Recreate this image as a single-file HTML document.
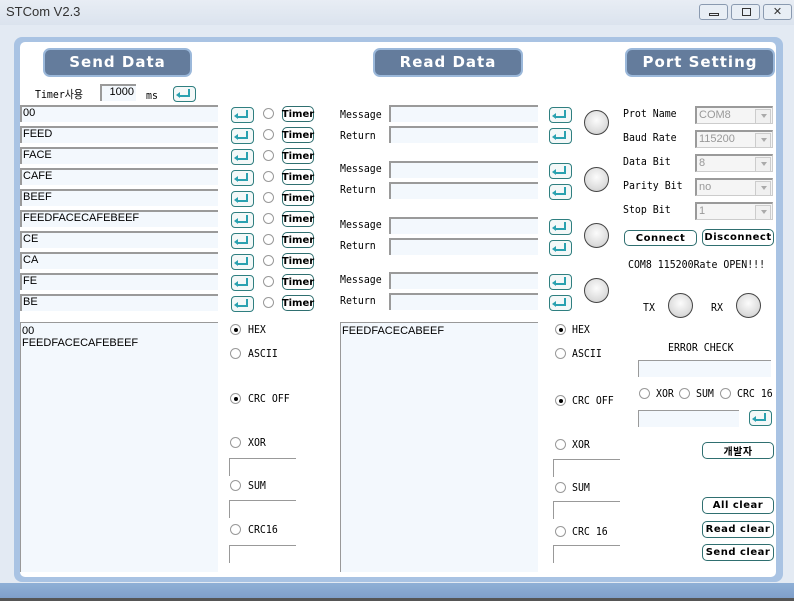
<!DOCTYPE html>
<html><head><meta charset="utf-8"><style>
*{box-sizing:border-box;margin:0;padding:0}
body{width:794px;height:601px;overflow:hidden;background:#e3eaf3;font-family:"Liberation Sans","Noto Sans CJK KR","NanumGothic",sans-serif;font-size:12px;color:#000;position:relative}
.a{position:absolute}
#title{left:0;top:0;width:794px;height:25px;background:linear-gradient(#e8edf4,#dbe3ee);font-size:13px;color:#333}
#frame{left:14px;top:37px;width:769px;height:545px;background:#a9c3e3;border-radius:8px}
#panel{left:20px;top:42px;width:756px;height:535px;background:#fff;border-radius:5px}
#bottom{left:0;top:583px;width:794px;height:15px;background:linear-gradient(#8fb0d6,#7f9fca)}
#bline{left:0;top:598px;width:794px;height:3px;background:#555}
.hdr{background:#647c9c;border:2px solid #9bb8da;border-radius:7px;color:#fff;font-weight:bold;font-size:15px;text-align:center;line-height:25px;letter-spacing:1px;font-family:"DejaVu Sans",sans-serif}
.in{background:#f3f8fd;border-top:2px solid #9a9a9a;border-left:2px solid #9a9a9a;font-size:11px;padding-left:1px;line-height:12px}
.ent{width:23px;height:16px;border:1.5px solid #2f7f80;border-radius:4px;background:#f4f8f8}
.ent:after{content:"";position:absolute;left:6px;top:2px;width:8px;height:6px;border-right:2.5px solid #2aa1b0;border-bottom:2.5px solid #2aa1b0}
.ent:before{content:"";position:absolute;left:2px;top:5px;border:3.5px solid transparent;border-right:4px solid #2aa1b0;border-left:0}
.rad{width:11px;height:11px;border-radius:50%;border:1px solid #999;background:#fff}
.rad.on:after{content:"";position:absolute;left:2.5px;top:2.5px;width:4px;height:4px;border-radius:50%;background:#000}
.tb,.btn{display:flex;align-items:center;justify-content:center;border:1.5px solid #2f6f70;border-radius:5px;background:#fff;font-weight:bold;font-size:10px;font-family:"DejaVu Sans",sans-serif}
.tb{width:32px;height:16px;letter-spacing:0}
.btn{letter-spacing:.5px}
.led{width:25px;height:25px;border-radius:50%;border:1.5px solid #444;background:radial-gradient(circle at 50% 40%,#fcfcfc,#dcdcdc 65%,#bdbdbd)}
.lb{font-size:11px;font-family:"DejaVu Sans Mono","Liberation Mono",monospace;transform:scaleX(.9);transform-origin:left}
.cb{width:78px;height:18px;border:2px solid #9a9a9a;border-right:1px solid #ccc;border-bottom:1px solid #ccc;background:#f5f5f5;color:#999;font-size:11px;padding-left:2px;line-height:14px}
.cb:after{content:"";position:absolute;right:1px;top:1px;width:14px;height:13px;background:#f0f0f0;border:1px solid #ccc}
.cb:before{content:"";position:absolute;right:5px;top:6px;border:3px solid transparent;border-top:4px solid #aaa;z-index:2}
.ln{border-top:1px solid #999;border-left:1px solid #999;height:18px}
</style></head><body>
<div id="title" class="a"><span class="a" style="left:6px;top:4px">STCom V2.3</span>
<div class="a" style="left:699px;top:4px;width:29px;height:16px;border:1px solid #8a9ab0;border-radius:3px;background:#e8eef5"><div class="a" style="left:9px;top:8px;width:10px;height:3px;border:1px solid #333"></div></div>
<div class="a" style="left:731px;top:4px;width:29px;height:16px;border:1px solid #8a9ab0;border-radius:3px;background:#e8eef5"><div class="a" style="left:10px;top:3px;width:9px;height:8px;border:1px solid #333"></div></div>
<div class="a" style="left:763px;top:4px;width:29px;height:16px;border:1px solid #8a9ab0;border-radius:3px;background:#e8eef5;text-align:center;font-size:11px;line-height:14px">✕</div>
</div>
<div id="frame" class="a"></div>
<div id="panel" class="a"></div>
<div id="bottom" class="a"></div>
<div id="bline" class="a"></div>

<div class="a hdr" style="left:43px;top:48px;width:149px;height:29px">Send Data</div>
<div class="a hdr" style="left:373px;top:48px;width:150px;height:29px">Read Data</div>
<div class="a hdr" style="left:625px;top:48px;width:150px;height:29px">Port Setting</div>

<div class="a lb" style="left:35px;top:86px">Timer사용</div>
<div class="a in" style="left:100px;top:84px;width:36px;height:17px;text-align:right;padding-right:2px">1000</div>
<div class="a lb" style="left:146px;top:89px">ms</div>
<div class="a ent" style="left:173px;top:86px"></div>

<div class="a in" style="left:20px;top:105px;width:198px;height:17px">00</div>
<div class="a in" style="left:20px;top:126px;width:198px;height:17px">FEED</div>
<div class="a in" style="left:20px;top:147px;width:198px;height:17px">FACE</div>
<div class="a in" style="left:20px;top:168px;width:198px;height:17px">CAFE</div>
<div class="a in" style="left:20px;top:189px;width:198px;height:17px">BEEF</div>
<div class="a in" style="left:20px;top:210px;width:198px;height:17px">FEEDFACECAFEBEEF</div>
<div class="a in" style="left:20px;top:231px;width:198px;height:17px">CE</div>
<div class="a in" style="left:20px;top:252px;width:198px;height:17px">CA</div>
<div class="a in" style="left:20px;top:273px;width:198px;height:17px">FE</div>
<div class="a in" style="left:20px;top:294px;width:198px;height:17px">BE</div>

<div class="a ent" style="left:231px;top:107px"></div><div class="a rad" style="left:263px;top:108px"></div><div class="a tb" style="left:282px;top:106px">Timer</div>
<div class="a ent" style="left:231px;top:128px"></div><div class="a rad" style="left:263px;top:129px"></div><div class="a tb" style="left:282px;top:127px">Timer</div>
<div class="a ent" style="left:231px;top:149px"></div><div class="a rad" style="left:263px;top:150px"></div><div class="a tb" style="left:282px;top:148px">Timer</div>
<div class="a ent" style="left:231px;top:170px"></div><div class="a rad" style="left:263px;top:171px"></div><div class="a tb" style="left:282px;top:169px">Timer</div>
<div class="a ent" style="left:231px;top:191px"></div><div class="a rad" style="left:263px;top:192px"></div><div class="a tb" style="left:282px;top:190px">Timer</div>
<div class="a ent" style="left:231px;top:212px"></div><div class="a rad" style="left:263px;top:213px"></div><div class="a tb" style="left:282px;top:211px">Timer</div>
<div class="a ent" style="left:231px;top:233px"></div><div class="a rad" style="left:263px;top:234px"></div><div class="a tb" style="left:282px;top:232px">Timer</div>
<div class="a ent" style="left:231px;top:254px"></div><div class="a rad" style="left:263px;top:255px"></div><div class="a tb" style="left:282px;top:253px">Timer</div>
<div class="a ent" style="left:231px;top:275px"></div><div class="a rad" style="left:263px;top:276px"></div><div class="a tb" style="left:282px;top:274px">Timer</div>
<div class="a ent" style="left:231px;top:296px"></div><div class="a rad" style="left:263px;top:297px"></div><div class="a tb" style="left:282px;top:295px">Timer</div>

<div class="a in" style="left:20px;top:322px;width:198px;height:250px;border-top:1px solid #999;border-left:1px solid #999;padding-top:2px">00<br>FEEDFACECAFEBEEF</div>
<div class="a rad on" style="left:230px;top:324px"></div><div class="a lb" style="left:248px;top:323px">HEX</div>
<div class="a rad" style="left:230px;top:348px"></div><div class="a lb" style="left:248px;top:347px">ASCII</div>
<div class="a rad on" style="left:230px;top:393px"></div><div class="a lb" style="left:248px;top:392px">CRC OFF</div>
<div class="a rad" style="left:230px;top:437px"></div><div class="a lb" style="left:248px;top:436px">XOR</div>
<div class="a ln" style="left:229px;top:458px;width:67px"></div>
<div class="a rad" style="left:230px;top:480px"></div><div class="a lb" style="left:248px;top:479px">SUM</div>
<div class="a ln" style="left:229px;top:500px;width:67px"></div>
<div class="a rad" style="left:230px;top:524px"></div><div class="a lb" style="left:248px;top:523px">CRC16</div>
<div class="a ln" style="left:229px;top:545px;width:67px"></div>

<div class="a lb" style="left:340px;top:108px">Message</div><div class="a in" style="left:389px;top:105px;width:149px;height:17px"></div><div class="a ent" style="left:549px;top:107px"></div>
<div class="a lb" style="left:340px;top:129px">Return</div><div class="a in" style="left:389px;top:126px;width:149px;height:17px"></div><div class="a ent" style="left:549px;top:128px"></div>
<div class="a led" style="left:584px;top:110px"></div>
<div class="a lb" style="left:340px;top:162px">Message</div><div class="a in" style="left:389px;top:161px;width:149px;height:17px"></div><div class="a ent" style="left:549px;top:163px"></div>
<div class="a lb" style="left:340px;top:183px">Return</div><div class="a in" style="left:389px;top:182px;width:149px;height:17px"></div><div class="a ent" style="left:549px;top:184px"></div>
<div class="a led" style="left:584px;top:167px"></div>
<div class="a lb" style="left:340px;top:218px">Message</div><div class="a in" style="left:389px;top:217px;width:149px;height:17px"></div><div class="a ent" style="left:549px;top:219px"></div>
<div class="a lb" style="left:340px;top:239px">Return</div><div class="a in" style="left:389px;top:238px;width:149px;height:17px"></div><div class="a ent" style="left:549px;top:240px"></div>
<div class="a led" style="left:584px;top:223px"></div>
<div class="a lb" style="left:340px;top:273px">Message</div><div class="a in" style="left:389px;top:272px;width:149px;height:17px"></div><div class="a ent" style="left:549px;top:274px"></div>
<div class="a lb" style="left:340px;top:294px">Return</div><div class="a in" style="left:389px;top:293px;width:149px;height:17px"></div><div class="a ent" style="left:549px;top:295px"></div>
<div class="a led" style="left:584px;top:278px"></div>

<div class="a in" style="left:340px;top:322px;width:198px;height:250px;border-top:1px solid #999;border-left:1px solid #999;padding-top:2px">FEEDFACECABEEF</div>
<div class="a rad on" style="left:555px;top:324px"></div><div class="a lb" style="left:572px;top:323px">HEX</div>
<div class="a rad" style="left:555px;top:348px"></div><div class="a lb" style="left:572px;top:347px">ASCII</div>
<div class="a rad on" style="left:555px;top:395px"></div><div class="a lb" style="left:572px;top:394px">CRC OFF</div>
<div class="a rad" style="left:555px;top:439px"></div><div class="a lb" style="left:572px;top:438px">XOR</div>
<div class="a ln" style="left:553px;top:459px;width:67px"></div>
<div class="a rad" style="left:555px;top:482px"></div><div class="a lb" style="left:572px;top:481px">SUM</div>
<div class="a ln" style="left:553px;top:501px;width:67px"></div>
<div class="a rad" style="left:555px;top:526px"></div><div class="a lb" style="left:572px;top:525px">CRC 16</div>
<div class="a ln" style="left:553px;top:545px;width:67px"></div>

<div class="a lb" style="left:623px;top:107px">Prot Name</div><div class="a cb" style="left:695px;top:106px">COM8</div>
<div class="a lb" style="left:623px;top:131px">Baud Rate</div><div class="a cb" style="left:695px;top:130px">115200</div>
<div class="a lb" style="left:623px;top:155px">Data Bit</div><div class="a cb" style="left:695px;top:154px">8</div>
<div class="a lb" style="left:623px;top:179px">Parity Bit</div><div class="a cb" style="left:695px;top:178px">no</div>
<div class="a lb" style="left:623px;top:203px">Stop Bit</div><div class="a cb" style="left:695px;top:202px">1</div>
<div class="a btn" style="left:624px;top:230px;width:73px;height:16px">Connect</div>
<div class="a btn" style="left:702px;top:229px;width:72px;height:17px">Disconnect</div>
<div class="a lb" style="left:628px;top:258px">COM8 115200Rate OPEN!!!</div>
<div class="a lb" style="left:643px;top:301px">TX</div><div class="a led" style="left:668px;top:293px"></div>
<div class="a lb" style="left:711px;top:301px">RX</div><div class="a led" style="left:736px;top:293px"></div>
<div class="a lb" style="left:668px;top:341px">ERROR CHECK</div>
<div class="a in" style="left:638px;top:360px;width:133px;height:17px;border-width:1px"></div>
<div class="a rad" style="left:639px;top:388px"></div><div class="a lb" style="left:656px;top:387px">XOR</div>
<div class="a rad" style="left:679px;top:388px"></div><div class="a lb" style="left:696px;top:387px">SUM</div>
<div class="a rad" style="left:720px;top:388px"></div><div class="a lb" style="left:737px;top:387px">CRC 16</div>
<div class="a in" style="left:638px;top:410px;width:101px;height:17px;border-width:1px"></div>
<div class="a ent" style="left:749px;top:410px"></div>
<div class="a btn" style="left:702px;top:442px;width:72px;height:17px;font-family:'Noto Sans CJK KR',sans-serif">개발자</div>
<div class="a btn" style="left:702px;top:497px;width:72px;height:17px">All clear</div>
<div class="a btn" style="left:702px;top:521px;width:72px;height:17px">Read clear</div>
<div class="a btn" style="left:702px;top:544px;width:72px;height:17px">Send clear</div>
</body></html>
